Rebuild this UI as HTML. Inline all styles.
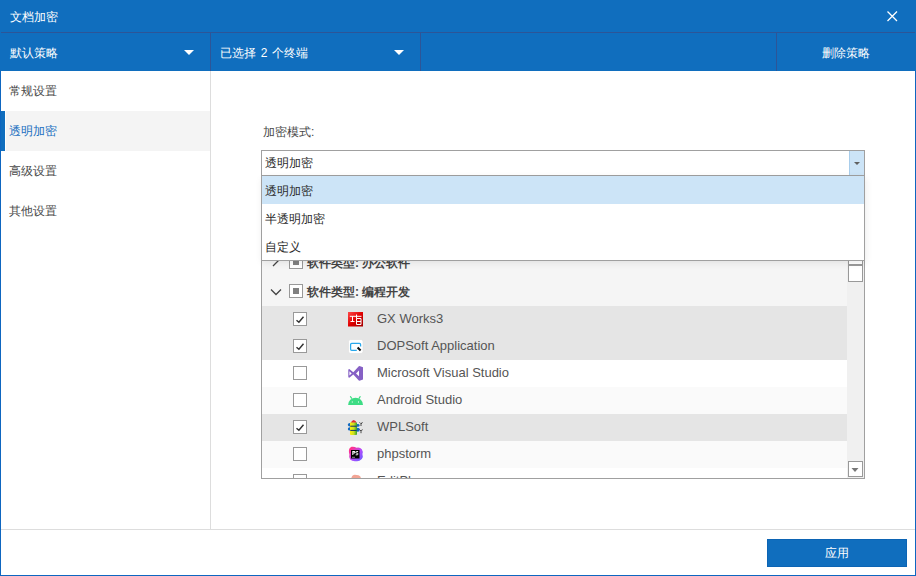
<!DOCTYPE html>
<html><head><meta charset="utf-8">
<style>
*{box-sizing:border-box;margin:0;padding:0}
html,body{width:916px;height:576px;overflow:hidden;background:#fff}
body{font-family:"Liberation Sans",sans-serif;font-size:12px;position:relative;color:#555}
.a{position:absolute}
.t{position:absolute;white-space:nowrap;line-height:16px}
#win{left:0;top:0;width:916px;height:576px;border:1px solid #0e66c0;border-top:none;background:#fff}
#title{left:0;top:0;width:916px;height:33px;background:#106ebe}
#tb{left:0;top:32px;width:916px;height:39px;background:#106ebe}
.line{position:absolute;background:#2d5597}
.tri{position:absolute;width:0;height:0;border-left:5px solid transparent;border-right:5px solid transparent;border-top:5px solid #fff}
.side{position:absolute;left:1px;width:209px;height:40px}
.side .t{left:8px;top:12px;color:#484848}
.row{position:absolute;left:262px;width:585px;height:27px}
.cb{position:absolute;width:14px;height:14px;border:1px solid #999;background:#fff}
.ic{position:absolute;left:86px;top:6px;width:16px;height:16px}
.row .t{left:115px;top:5px;font-size:13px;color:#555}
</style></head><body>
<div id="win" class="a"></div>
<div id="title" class="a"></div>
<div class="t" style="left:10px;top:9px;color:#fff">文档加密</div>
<svg class="a" style="left:886px;top:10px" width="12" height="12" viewBox="0 0 12 12"><path d="M1.5 1.5L11 11M11 1.5L1.5 11" stroke="#fff" stroke-width="1.3" fill="none"/></svg>
<div id="tb" class="a"></div>
<div class="line" style="left:1px;top:32px;width:914px;height:1px"></div>
<div class="line" style="left:210px;top:33px;width:1px;height:38px"></div>
<div class="line" style="left:420px;top:33px;width:1px;height:38px"></div>
<div class="line" style="left:776px;top:33px;width:1px;height:38px"></div>
<div class="t" style="left:10px;top:45px;color:#fff">默认策略</div>
<div class="tri" style="left:184px;top:50px"></div>
<div class="t" style="left:220px;top:45px;color:#fff;word-spacing:1.5px">已选择 2 个终端</div>
<div class="tri" style="left:394px;top:50px"></div>
<div class="t" style="left:822px;top:45px;color:#fff">删除策略</div>

<!-- sidebar -->
<div class="a" style="left:210px;top:71px;width:1px;height:458px;background:#ddd"></div>
<div class="side" style="top:71px"><div class="t">常规设置</div></div>
<div class="side" style="top:111px"><div class="a" style="left:5px;top:0;width:204px;height:40px;background:#f4f4f4"></div><div class="a" style="left:0;top:0;width:4px;height:40px;background:#106ebe"></div><div class="t" style="color:#1a6fc0">透明加密</div></div>
<div class="side" style="top:151px"><div class="t">高级设置</div></div>
<div class="side" style="top:191px"><div class="t">其他设置</div></div>

<!-- footer -->
<div class="a" style="left:1px;top:529px;width:914px;height:1px;background:#ddd"></div>
<div class="a" style="left:767px;top:539px;width:140px;height:28px;background:#106ebe;border:1px solid #0c64b4"></div>
<div class="t" style="left:825px;top:545px;color:#fff">应用</div>

<!-- label -->
<div class="t" style="left:263px;top:124px;color:#484848">加密模式:</div>

<!-- tree list -->
<div class="a" style="left:261px;top:248px;width:604px;height:231px;border:1px solid #a0a0a0;background:#fff;overflow:hidden">
<div class="a" style="left:0;top:0;width:585px;height:57px;background:#f5f5f5"></div>
<svg class="a" style="left:8px;top:4px" width="12" height="14"><path d="M3 2L8.5 7.5L3 13" stroke="#444" stroke-width="1.3" fill="none"/></svg>
<div class="cb" style="left:27px;top:6px"><div class="a" style="left:3px;top:3px;width:6px;height:6px;background:#808080"></div></div>
<div class="t" style="left:45px;top:6px;font-weight:bold;color:#444">软件类型: 办公软件</div>
<svg class="a" style="left:8px;top:38px" width="14" height="10"><path d="M1 2.5L6 7.5L11 2.5" stroke="#444" stroke-width="1.3" fill="none"/></svg>
<div class="cb" style="left:27px;top:35px"><div class="a" style="left:3px;top:3px;width:6px;height:6px;background:#808080"></div></div>
<div class="t" style="left:45px;top:35px;font-weight:bold;color:#444">软件类型: 编程开发</div>
<div class="row" style="left:0;top:57px;background:#e5e5e5"><div class="cb" style="left:31px;top:6px"><svg class="a" style="left:0;top:0" width="12" height="12"><path d="M2.5 7.2L4.9 9.2L9.5 3.8" stroke="#333" stroke-width="1.45" fill="none"/></svg></div><svg class="a" style="left:84px;top:3px" width="20" height="20"><defs><linearGradient id="g1" x1="0" y1="0" x2="1" y2="1"><stop offset="0" stop-color="#ff4a4a"/><stop offset="0.5" stop-color="#e00000"/><stop offset="1" stop-color="#a00000"/></linearGradient></defs><rect x="2" y="3" width="15" height="14.5" fill="url(#g1)"/><path d="M3.8 7.3H15.5M6.5 7.3V12.5M4.5 12.5H8.5M10.5 5.5V9.5M10.5 9.5H15V15.5H10.5ZM10.5 12.5H15" stroke="#fff" stroke-width="1" fill="none"/></svg><div class="t">GX Works3</div></div>
<div class="row" style="left:0;top:84px;background:#e5e5e5"><div class="cb" style="left:31px;top:6px"><svg class="a" style="left:0;top:0" width="12" height="12"><path d="M2.5 7.2L4.9 9.2L9.5 3.8" stroke="#333" stroke-width="1.45" fill="none"/></svg></div><svg class="a" style="left:84px;top:3px" width="20" height="20"><rect x="2.5" y="3.5" width="14.5" height="14" rx="2" fill="#fff" stroke="#ddd" stroke-width="0.6"/><path d="M14.6 10.6V8.4Q14.6 7.3 13.5 7.3H5.7Q4.6 7.3 4.6 8.4V13.2Q4.6 14.3 5.7 14.3H10.8" stroke="#29a8ec" stroke-width="1.25" fill="none"/><path d="M11.6 11.6L14.6 14.4" stroke="#111" stroke-width="2.1" fill="none"/></svg><div class="t">DOPSoft Application</div></div>
<div class="row" style="left:0;top:111px;background:#fff"><div class="cb" style="left:31px;top:6px"></div><svg class="a" style="left:84px;top:4px" width="20" height="20"><path fill-rule="evenodd" fill="#8661c5" d="M2.3 5.5L3.3 5L7.3 8.3L12.8 2.3L13.5 2L17 3.2V15.5L13.5 16.8L12.8 16.5L7.3 10.4L3.3 13.8L2.3 13.3ZM10 9.4L13 6.6V12.3ZM3.4 7.3V11.5L5.7 9.4Z"/></svg><div class="t">Microsoft Visual Studio</div></div>
<div class="row" style="left:0;top:138px;background:#fafafa"><div class="cb" style="left:31px;top:6px"></div><svg class="a" style="left:84px;top:5px" width="20" height="20"><path d="M2.1 13A7.45 7.3 0 0 1 17 13Z" fill="#3ddc84"/><path d="M4.3 4.2L5.8 6.6M14.4 4.2L12.9 6.6" stroke="#3ddc84" stroke-width="1.2"/><rect x="5.8" y="9" width="1" height="2" fill="#9eeec2"/><rect x="12" y="9" width="1" height="2" fill="#9eeec2"/></svg><div class="t">Android Studio</div></div>
<div class="row" style="left:0;top:165px;background:#e5e5e5"><div class="cb" style="left:31px;top:6px"><svg class="a" style="left:0;top:0" width="12" height="12"><path d="M2.5 7.2L4.9 9.2L9.5 3.8" stroke="#333" stroke-width="1.45" fill="none"/></svg></div><svg class="a" style="left:84px;top:4px" width="20" height="20"><defs><linearGradient id="g2" x1="0" x2="1"><stop offset="0.15" stop-color="#f4ec10"/><stop offset="0.55" stop-color="#c8e020"/><stop offset="1" stop-color="#30a030"/></linearGradient></defs><ellipse cx="3.8" cy="6.7" rx="2" ry="1.7" fill="#1068c0"/><ellipse cx="3.8" cy="10.9" rx="2" ry="1.7" fill="#1068c0"/><ellipse cx="11.6" cy="7.4" rx="2" ry="1.4" fill="#1068c0"/><ellipse cx="11.8" cy="11.8" rx="2" ry="2" fill="#1068c0"/><path d="M4 5Q4 4.2 5 4.2H10Q11 4.2 11 5V16Q11 17 10 17H5Q4 17 4 16Z" fill="url(#g2)"/><path d="M4.3 8.2H10.7M4.3 12.4H10.7" stroke="#0c2a70" stroke-width="1"/><path d="M5 4.5Q5.5 2.8 7.7 2Q10 2.8 10.5 4.5Z" fill="#e03030"/><path d="M13.6 4.4L15 5.8M16.4 4.2L15 6.3V8M13.6 11.6L15 13M16.4 11.4L15 13.5V15.2" stroke="#333" stroke-width="0.9" fill="none"/></svg><div class="t">WPLSoft</div></div>
<div class="row" style="left:0;top:192px;background:#fafafa"><div class="cb" style="left:31px;top:6px"></div><svg class="a" style="left:84px;top:3px" width="20" height="20"><defs><linearGradient id="g3" x1="0" y1="0" x2="1" y2="1"><stop offset="0.15" stop-color="#ff318c"/><stop offset="0.55" stop-color="#b34bff"/><stop offset="1" stop-color="#6060ff"/></linearGradient></defs><path d="M5.5 2.8Q8.5 2.3 10.5 3.8Q13.8 3 15.8 5.3Q17.4 7.8 16.4 10Q17.5 12.6 15.8 15Q13 17.8 10 17.2Q6.2 17.6 4.2 15.5Q2.6 13 3.4 10.6Q2.2 6 3.8 4Z" fill="url(#g3)"/><rect x="5" y="6" width="8.5" height="8.5" fill="#000"/><path d="M6.3 7H8.2Q9.4 7 9.4 8.2Q9.4 9.4 8.2 9.4H7.3V11H6.3ZM7.3 7.9V8.5H8Q8.4 8.5 8.4 8.2Q8.4 7.9 8 7.9Z" fill="#fff" fill-rule="evenodd"/><path d="M12.1 7.5H10.6Q9.8 7.5 9.8 8.3Q9.8 9.1 10.6 9.1H11.1Q12 9.1 12 10Q12 10.8 11.1 10.8H9.7" stroke="#fff" stroke-width="0.95" fill="none"/><rect x="6" y="12.8" width="3" height="0.9" fill="#999"/></svg><div class="t">phpstorm</div></div>
<div class="row" style="left:0;top:219px;background:#fff"><div class="cb" style="left:31px;top:6px"></div><svg class="a" style="left:84px;top:3px" width="20" height="20"><path d="M5.3 7Q6.5 3.6 8.8 3.7L12.5 4.3Q14.6 4.8 14.9 7Z" fill="#f2a494"/></svg><div class="t">EditPlus</div></div>
<!-- scrollbar -->
<div class="a" style="left:585px;top:0;width:17px;height:229px;background:#f0f0f0"></div>
<div class="a" style="left:586px;top:0;width:15px;height:17px;border:1px solid #999;background:#fff"></div>
<div class="a" style="left:586px;top:15px;width:15px;height:18px;border:1px solid #999;border-top:2px solid #999;background:#fff"></div>
<div class="a" style="left:586px;top:212px;width:15px;height:16px;border:1px solid #999;background:#fff"></div>
<svg class="a" style="left:586px;top:212px" width="16" height="16"><path d="M3.5 7H10.5L7 11Z" fill="#777"/></svg>
</div>

<!-- combobox -->
<div class="a" style="left:261px;top:150px;width:604px;height:26px;border:1px solid #a0a0a0;background:#fff"></div>
<div class="a" style="left:849px;top:151px;width:15px;height:24px;background:#cce4f7;border-left:1px solid #a8cdeb"></div>
<div class="a" style="left:854px;top:162px;width:0;height:0;border-left:3px solid transparent;border-right:3px solid transparent;border-top:3px solid #606060"></div>
<div class="t" style="left:265px;top:155px;color:#2a2a2a">透明加密</div>
<!-- dropdown -->
<div class="a" style="left:261px;top:176px;width:604px;height:85px;border:1px solid #a0a0a0;border-top:none;background:#fff;box-shadow:1px 2px 7px rgba(0,0,0,0.08)"></div>
<div class="a" style="left:262px;top:176px;width:602px;height:28px;background:#cce4f7"></div>
<div class="t" style="left:265px;top:183px;color:#2a2a2a">透明加密</div>
<div class="t" style="left:265px;top:211px;color:#2a2a2a">半透明加密</div>
<div class="t" style="left:265px;top:239px;color:#2a2a2a">自定义</div>
</body></html>
